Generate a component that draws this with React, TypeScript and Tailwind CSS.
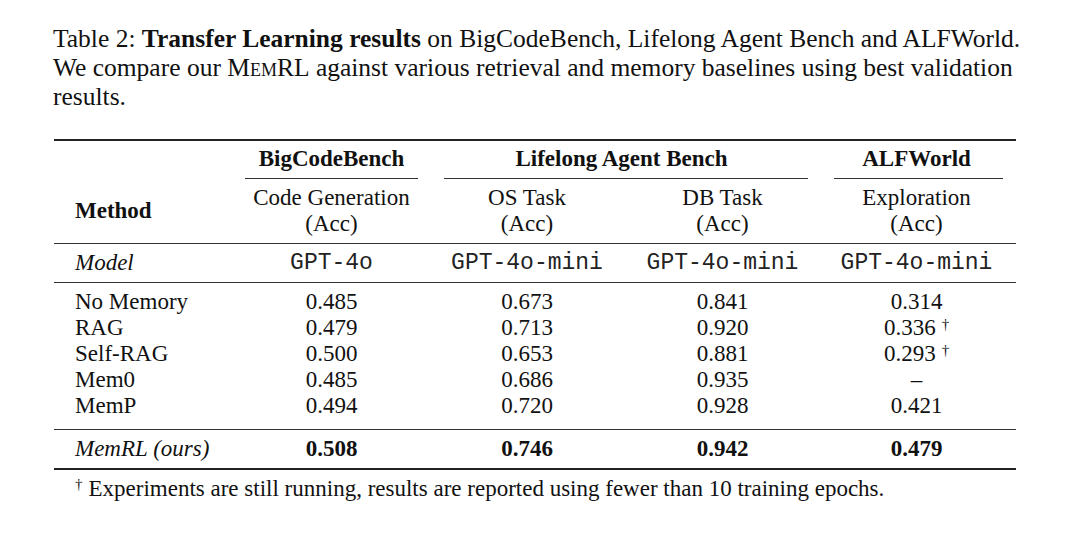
import React from "react";

const serif = "font-['Liberation_Serif','Times_New_Roman',serif]";
const mono = "font-['Liberation_Mono','Courier_New',monospace]";

const Dag = () => (
  <span className="inline-block align-top text-[15px] leading-[15px] text-[#111] ml-[6px] mt-[2px] font-['Liberation_Serif',serif]">†</span>
);

type Row = { name: string; v: React.ReactNode[] };

const rows: Row[] = [
  { name: "No Memory", v: ["0.485", "0.673", "0.841", "0.314"] },
  { name: "RAG", v: ["0.479", "0.713", "0.920", <>0.336<Dag /></>] },
  { name: "Self-RAG", v: ["0.500", "0.653", "0.881", <>0.293<Dag /></>] },
  { name: "Mem0", v: ["0.485", "0.686", "0.935", "–"] },
  { name: "MemP", v: ["0.494", "0.720", "0.928", "0.421"] },
];

const grid = "grid grid-cols-[183px_189px_202px_189px_199px]";

export default function App() {
  return (
    <div className={`w-[1080px] h-[540px] bg-white text-[#111] ${serif} overflow-hidden`}>
      <div className="pt-[24px] pl-[53px] pr-[54px] text-[25.5px] leading-[29px]">
        Table 2: <b>Transfer Learning results</b> on BigCodeBench, Lifelong Agent Bench and ALFWorld.
        We compare our <span className="[font-variant-caps:small-caps]">MemRL</span> against various retrieval and memory baselines using best validation
        results.
      </div>

      <div className="mt-[28px] ml-[54px] w-[962px] text-[23px]">
        <div className="h-[2px] bg-[#222]" />
        {/* header */}
        <div className={`${grid} grid-rows-[37px_1px_64px]`}>
          <div className="col-start-1 row-start-3 flex items-center pl-[21px] font-bold">Method</div>
          <div className="col-start-2 row-start-1 flex items-center justify-center font-bold">BigCodeBench</div>
          <div className="col-start-3 col-span-2 row-start-1 flex items-center justify-center font-bold">Lifelong Agent Bench</div>
          <div className="col-start-5 row-start-1 flex items-center justify-center font-bold">ALFWorld</div>
          <div className="col-start-2 row-start-2 ml-[8px] mr-[8px] bg-[#333]" />
          <div className="col-start-3 col-span-2 row-start-2 ml-[18px] mr-[9px] bg-[#333]" />
          <div className="col-start-5 row-start-2 ml-[17px] mr-[13px] bg-[#333]" />
          <div className="col-start-2 row-start-3 flex flex-col items-center justify-center leading-[26px]">
            <span>Code Generation</span>
            <span>(Acc)</span>
          </div>
          <div className="col-start-3 row-start-3 flex flex-col items-center justify-center leading-[26px]">
            <span>OS Task</span>
            <span>(Acc)</span>
          </div>
          <div className="col-start-4 row-start-3 flex flex-col items-center justify-center leading-[26px]">
            <span>DB Task</span>
            <span>(Acc)</span>
          </div>
          <div className="col-start-5 row-start-3 flex flex-col items-center justify-center leading-[26px]">
            <span>Exploration</span>
            <span>(Acc)</span>
          </div>
        </div>
        <div className="h-px bg-[#333]" />
        <div className={`${grid} h-[38px] items-center`}>
          <div className="pl-[21px] italic">Model</div>
          <div className={`text-center ${mono} text-[23px] text-[#222]`}>GPT-4o</div>
          <div className={`text-center ${mono} text-[23px] text-[#222]`}>GPT-4o-mini</div>
          <div className={`text-center ${mono} text-[23px] text-[#222]`}>GPT-4o-mini</div>
          <div className={`text-center ${mono} text-[23px] text-[#222]`}>GPT-4o-mini</div>
        </div>
        <div className="h-px bg-[#333]" />
        <div className="pt-[6px] pb-[10px]">
          {rows.map((r) => (
            <div key={r.name} className={`${grid} h-[26px] items-center leading-[26px]`}>
              <div className="pl-[21px]">{r.name}</div>
              {r.v.map((v, i) => (
                <div key={i} className="text-center">{v}</div>
              ))}
            </div>
          ))}
        </div>
        <div className="h-px bg-[#333]" />
        <div className={`${grid} h-[38px] items-center`}>
          <div className="pl-[21px] italic">MemRL (ours)</div>
          <div className="text-center font-bold">0.508</div>
          <div className="text-center font-bold">0.746</div>
          <div className="text-center font-bold">0.942</div>
          <div className="text-center font-bold">0.479</div>
        </div>
        <div className="h-[2px] bg-[#222]" />
        <div className="mt-[6px] pl-[21px] leading-[26px]">
          <span className="inline-block align-top text-[15px] leading-[15px] mt-[1px] mr-[6px]">†</span>Experiments are still running, results are reported using fewer than 10 training epochs.
        </div>
      </div>
    </div>
  );
}
